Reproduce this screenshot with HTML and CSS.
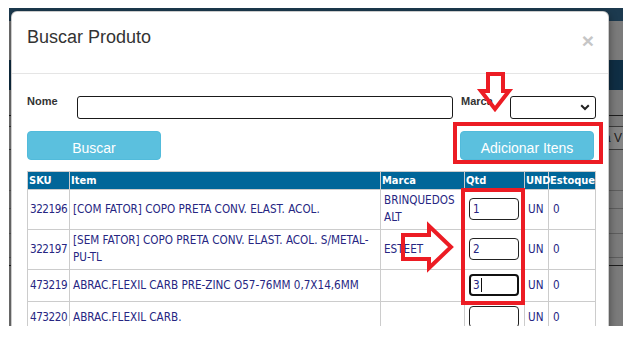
FILE: index.html
```html
<!DOCTYPE html>
<html lang="pt">
<head>
<meta charset="utf-8">
<title>Buscar Produto</title>
<link rel="stylesheet" href="styles.css">
</head>
<body>
<div class="frame">
  <div class="backdrop">
    <div class="bg-top"></div>
    <div class="bg-gap g39"></div>
    <div class="bg-band"></div>
    <div class="bg-gap g25"></div>
    <div class="bg-line dark"></div>
    <div class="bg-gap g10"></div>
    <div class="bg-cell">a V</div>
    <div class="bg-gap g40"></div>
    <div class="bg-line"></div>
    <div class="bg-gap g17"></div>
    <div class="bg-line"></div>
    <div class="bg-gap g24"></div>
    <div class="bg-line"></div>
    <div class="bg-gap g23"></div>
    <div class="bg-line"></div>
    <div class="bg-gap g7"></div>
    <div class="bg-line dark"></div>
  </div>

  <div class="modal">
    <div class="modal-header">
      <h4 class="modal-title">Buscar Produto</h4>
      <span class="close">×</span>
    </div>
    <div class="modal-body">
      <div class="form-row">
        <label class="lbl lbl-nome">Nome</label>
        <input class="field field-nome" type="text">
        <label class="lbl lbl-marca">Marca</label>
        <div class="field field-select">
          <svg class="chev" width="10" height="7" viewBox="0 0 10 7"><path d="M1.2 1.2 L5 5 L8.8 1.2" fill="none" stroke="#222" stroke-width="2"/></svg>
        </div>
      </div>
      <div class="btn-row">
        <div class="btn btn-buscar">Buscar</div>
        <div class="btn btn-add">Adicionar Itens</div>
      </div>
      <table class="grid">
        <colgroup>
          <col class="c-sku"><col class="c-item"><col class="c-marca"><col class="c-qtd"><col class="c-und"><col class="c-est">
        </colgroup>
        <thead>
          <tr><th>SKU</th><th>Item</th><th>Marca</th><th>Qtd</th><th>UND</th><th>Estoque</th></tr>
        </thead>
        <tbody>
          <tr>
            <td class="sku">322196</td>
            <td>[COM FATOR] COPO PRETA CONV. ELAST. ACOL.</td>
            <td>BRINQUEDOS ALT</td>
            <td class="qcell"><input class="qty" type="text" value="1"></td>
            <td>UN</td>
            <td class="est">0</td>
          </tr>
          <tr>
            <td class="sku">322197</td>
            <td>[SEM FATOR] COPO PRETA CONV. ELAST. ACOL. S/METAL-PU-TL</td>
            <td>ESTEET</td>
            <td class="qcell"><input class="qty" type="text" value="2"></td>
            <td>UN</td>
            <td class="est">0</td>
          </tr>
          <tr>
            <td class="sku">473219</td>
            <td>ABRAC.FLEXIL CARB PRE-ZINC O57-76MM 0,7X14,6MM</td>
            <td></td>
            <td class="qcell"><div class="qty qty-focus">3<span class="caret"></span></div></td>
            <td>UN</td>
            <td class="est">0</td>
          </tr>
          <tr>
            <td class="sku">473220</td>
            <td>ABRAC.FLEXIL CARB.</td>
            <td></td>
            <td class="qcell"><input class="qty" type="text" value=""></td>
            <td>UN</td>
            <td class="est">0</td>
          </tr>
        </tbody>
      </table>
    </div>
  </div>

  <svg class="marks" width="614" height="318" viewBox="0 0 614 318">
    <g transform="translate(-9,-8)" fill="none" stroke="#ec1c24" stroke-width="4">
      <rect x="455" y="124" width="146" height="38"/>
      <rect x="463" y="190" width="60" height="113"/>
      <polygon points="488,74 503,74 503,91 509,91 495,109 481,91 488,91"/>
      <polygon points="403,235 429,235 429,226 451,247 429,268 429,259 403,259"/>
    </g>
  </svg>
</div>
</body>
</html>
```
FILE: styles.css
```css
html, body {
  margin: 0;
  padding: 0;
  background: #ffffff;
}

body {
  font-family: "Liberation Sans", Arial, sans-serif;
}

.frame {
  position: relative;
  margin: 8px 0 0 9px;
  width: 614px;
  height: 318px;
  overflow: hidden;
  background: #7b7b7b;
}

/* dimmed page behind the modal */
.backdrop {
  display: flex;
  flex-direction: column;
}
.bg-top { height: 13px; background: #1c3a4f; }
.bg-band { height: 30px; background: #0f2e44; }
.bg-line { height: 1px; background: #5e5e5e; }
.bg-line.dark { background: #1e1e1e; }
.g39 { height: 39px; }
.g25 { height: 25px; }
.g10 { height: 10px; }
.g40 { height: 40px; }
.g17 { height: 17px; }
.g24 { height: 24px; }
.g23 { height: 23px; }
.g7 { height: 7px; }
.bg-cell {
  height: 22px;
  border-top: 1px solid #3c3c3c;
  border-bottom: 1px solid #3c3c3c;
  background: #858585;
  color: #1a1a1a;
  font-size: 12px;
  line-height: 22px;
  text-align: right;
  padding-right: 1px;
}

/* modal */
.modal {
  position: absolute;
  left: 2px;
  top: 3px;
  width: 598px;
  height: 330px;
  box-sizing: border-box;
  background: #ffffff;
  border: 1px solid rgba(0, 0, 0, 0.2);
  border-radius: 6px;
  box-shadow: 0 3px 9px rgba(0, 0, 0, 0.45);
}

.modal-header {
  display: flex;
  justify-content: space-between;
  align-items: flex-start;
  padding: 12px 14px 22px 15px;
  border-bottom: 1px solid #e5e5e5;
}

.modal-title {
  margin: 0;
  font-size: 18px;
  font-weight: normal;
  line-height: 26px;
  color: #333333;
}

.close {
  margin-top: 6px;
  font-size: 21px;
  font-weight: bold;
  line-height: 21px;
  color: #c6c6c6;
}

.modal-body {
  padding: 21px 12px 0 15px;
}

.form-row {
  display: flex;
  align-items: flex-start;
}

.lbl {
  font-size: 11px;
  font-weight: bold;
  line-height: 13px;
  color: #333333;
}
.lbl-nome { width: 50px; }
.lbl-marca { width: 49px; margin-left: 8px; }

.field {
  box-sizing: border-box;
  height: 23px;
  margin: 1px 0 0 0;
  border: 1px solid #1a1a1a;
  border-radius: 3px;
  background: #ffffff;
}
.field-nome { width: 376px; padding: 0 4px; }
.field-select {
  width: 86px;
  display: flex;
  align-items: center;
  justify-content: flex-end;
  padding-right: 5px;
}

.btn-row {
  display: flex;
  justify-content: space-between;
  margin-top: 12px;
}

.btn {
  box-sizing: border-box;
  width: 134px;
  height: 29px;
  padding-top: 4px;
  display: flex;
  align-items: center;
  justify-content: center;
  background: #5bc0de;
  border: 1px solid #52bbdb;
  border-radius: 4px;
  color: #ffffff;
  font-size: 14px;
}
.btn-add { margin-right: 2px; }

/* table */
.grid {
  margin-top: 11px;
  width: 569px;
  table-layout: fixed;
  border-collapse: collapse;
  font-family: "DejaVu Sans Condensed", "DejaVu Sans", sans-serif;
  font-stretch: semi-condensed;
  font-size: 11.6px;
}
.c-sku { width: 42px; }
.c-item { width: 311px; }
.c-marca { width: 84px; }
.c-qtd { width: 60px; }
.c-und { width: 24px; }
.c-est { width: 47px; }

.grid th, .grid td {
  border: 1px solid #cccccc;
  text-align: left;
  vertical-align: middle;
}

.grid th {
  height: 17px;
  padding: 0 0 0 1px;
  line-height: 17px;
  background: #006699;
  color: #ffffff;
  font-size: 11px;
  font-weight: bold;
  white-space: nowrap;
  overflow: visible;
}

.grid td {
  padding: 2px 3px 3px 3px;
  line-height: 17px;
  color: #262682;
}
.grid td.sku {
  padding-left: 2px;
  letter-spacing: -0.45px;
}
.grid td.est { padding-left: 4px; }
.grid td.qcell { padding-left: 3px; }

.qty {
  display: block;
  box-sizing: border-box;
  width: 50px;
  height: 22px;
  margin: 2px 0 2px 1px;
  padding: 0 3px;
  border: 1px solid #222222;
  border-radius: 4px;
  background: #ffffff;
  font-family: "DejaVu Sans Condensed", "DejaVu Sans", sans-serif;
  font-stretch: semi-condensed;
  font-size: 11.6px;
  color: #262682;
  outline: none;
}

.qty-focus {
  display: flex;
  align-items: center;
  border: 2px solid #111111;
  padding: 0 2px;
  line-height: 17px;
}

.caret {
  display: inline-block;
  width: 1px;
  height: 14px;
  margin-left: 1px;
  background: #111111;
}

.marks {
  position: absolute;
  left: 0;
  top: 0;
  pointer-events: none;
}
```
